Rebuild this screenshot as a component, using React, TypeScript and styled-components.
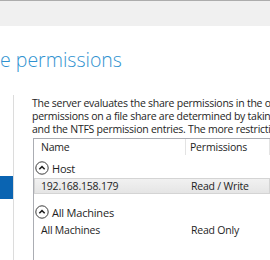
import React from "react";
import styled, { createGlobalStyle } from "styled-components";

const Global = createGlobalStyle`
  *, *::before, *::after { box-sizing: border-box; }
  html, body { margin: 0; padding: 0; background: #ffffff; overflow: hidden; }
  body { font-family: "Open Sans", "Noto Sans", "Liberation Sans", sans-serif; color: #1e1e1e; }
`;

const Page = styled.div`
  width: 270px;
  height: 260px;
  overflow: hidden;
  display: flex;
  flex-direction: column;
`;

const TopBar = styled.div`
  height: 26px;
  flex: none;
  background: #f0f0f0;
  border-top: 1px solid #acacac;
`;

const Header = styled.div`
  height: 69px;
  flex: none;
  display: flex;
  align-items: flex-start;
`;

const Title = styled.h1`
  margin: 20px 0 0 0;
  font-family: "Open Sans", "Noto Sans", sans-serif;
  font-weight: 300;
  font-size: 19.5px;
  line-height: 28px;
  color: #2f92d0;
  white-space: nowrap;
`;

const Main = styled.div`
  flex: 1;
  display: flex;
  min-height: 0;
`;

const Nav = styled.div`
  width: 14px;
  flex: none;
  border-right: 1px solid #dcdcdc;
  display: flex;
  flex-direction: column;
  padding-top: 81px;
`;

const NavItem = styled.div<{ $selected?: boolean }>`
  height: 23px;
  background: ${(p) => (p.$selected ? "#0a64b2" : "transparent")};
`;

const Content = styled.div`
  flex: 1;
  min-width: 0;
  padding-left: 18px;
  display: flex;
  flex-direction: column;
`;

const Description = styled.div`
  font-size: 10.5px;
  line-height: 13px;
  letter-spacing: -0.25px;
  padding-top: 2px;
  color: #1e1e1e;
`;

const Line = styled.div`
  white-space: nowrap;
`;

const ListView = styled.div`
  margin-top: 2px;
  margin-left: 1px;
  border-top: 1px solid #abadb3;
  border-left: 1px solid #abadb3;
  flex: 1;
  display: flex;
  flex-direction: column;
  font-size: 10.5px;
  letter-spacing: -0.2px;
`;

const ListHeader = styled.div`
  display: flex;
  height: 16px;
  flex: none;
`;

const HeaderCell = styled.div<{ $width?: number; $pad?: number }>`
  ${(p) => (p.$width ? `width: ${p.$width}px; flex: none;` : "flex: 1;")}
  padding-left: ${(p) => p.$pad ?? 7}px;
  display: flex;
  align-items: center;
  white-space: nowrap;
  border-right: 1px solid #e3e3e3;
  color: #1e1e1e;
`;

const GroupHeader = styled.div<{ $top: number }>`
  margin-top: ${(p) => p.$top}px;
  height: 20px;
  display: flex;
  align-items: center;
  gap: 3px;
  padding-left: 1px;
  font-size: 11px;
  color: #1e1e1e;
  white-space: nowrap;
`;

const Row = styled.div<{ $selected?: boolean }>`
  height: 16px;
  display: flex;
  align-items: center;
  border: 1px solid ${(p) => (p.$selected ? "#d4d4d4" : "transparent")};
  background: ${(p) =>
    p.$selected ? "linear-gradient(#f1f1f1, #e5e5e5)" : "transparent"};
  white-space: nowrap;
`;

const Cell = styled.div<{ $width?: number }>`
  ${(p) => (p.$width ? `width: ${p.$width}px; flex: none;` : "flex: 1;")}
  padding-left: 6px;
`;

const Collapse = () => (
  <svg width="14" height="14" viewBox="0 0 14 14">
    <circle cx="7" cy="7" r="6.2" fill="none" stroke="#3c3c3c" strokeWidth="1" />
    <path d="M4.3 8.3 L7 5.6 L9.7 8.3" fill="none" stroke="#1e1e1e" strokeWidth="1.5" />
  </svg>
);

export default function App() {
  return (
    <>
      <Global />
      <Page>
        <TopBar />
        <Header>
          <Title>e permissions</Title>
        </Header>
        <Main>
          <Nav>
            <NavItem $selected />
          </Nav>
          <Content>
            <Description>
              <Line>The server evaluates the share permissions in the order of entries.</Line>
              <Line>permissions on a file share are determined by taking into account</Line>
              <Line>and the NTFS permission entries. The more restrictive one applies.</Line>
            </Description>
            <ListView>
              <ListHeader>
                <HeaderCell $width={152}>Name</HeaderCell>
                <HeaderCell $pad={4}>Permissions</HeaderCell>
              </ListHeader>
              <GroupHeader $top={3}>
                <Collapse />
                Host
              </GroupHeader>
              <Row $selected>
                <Cell $width={150}>192.168.158.179</Cell>
                <Cell>Read / Write</Cell>
              </Row>
              <GroupHeader $top={8}>
                <Collapse />
                All Machines
              </GroupHeader>
              <Row>
                <Cell $width={150}>All Machines</Cell>
                <Cell>Read Only</Cell>
              </Row>
            </ListView>
          </Content>
        </Main>
      </Page>
    </>
  );
}
